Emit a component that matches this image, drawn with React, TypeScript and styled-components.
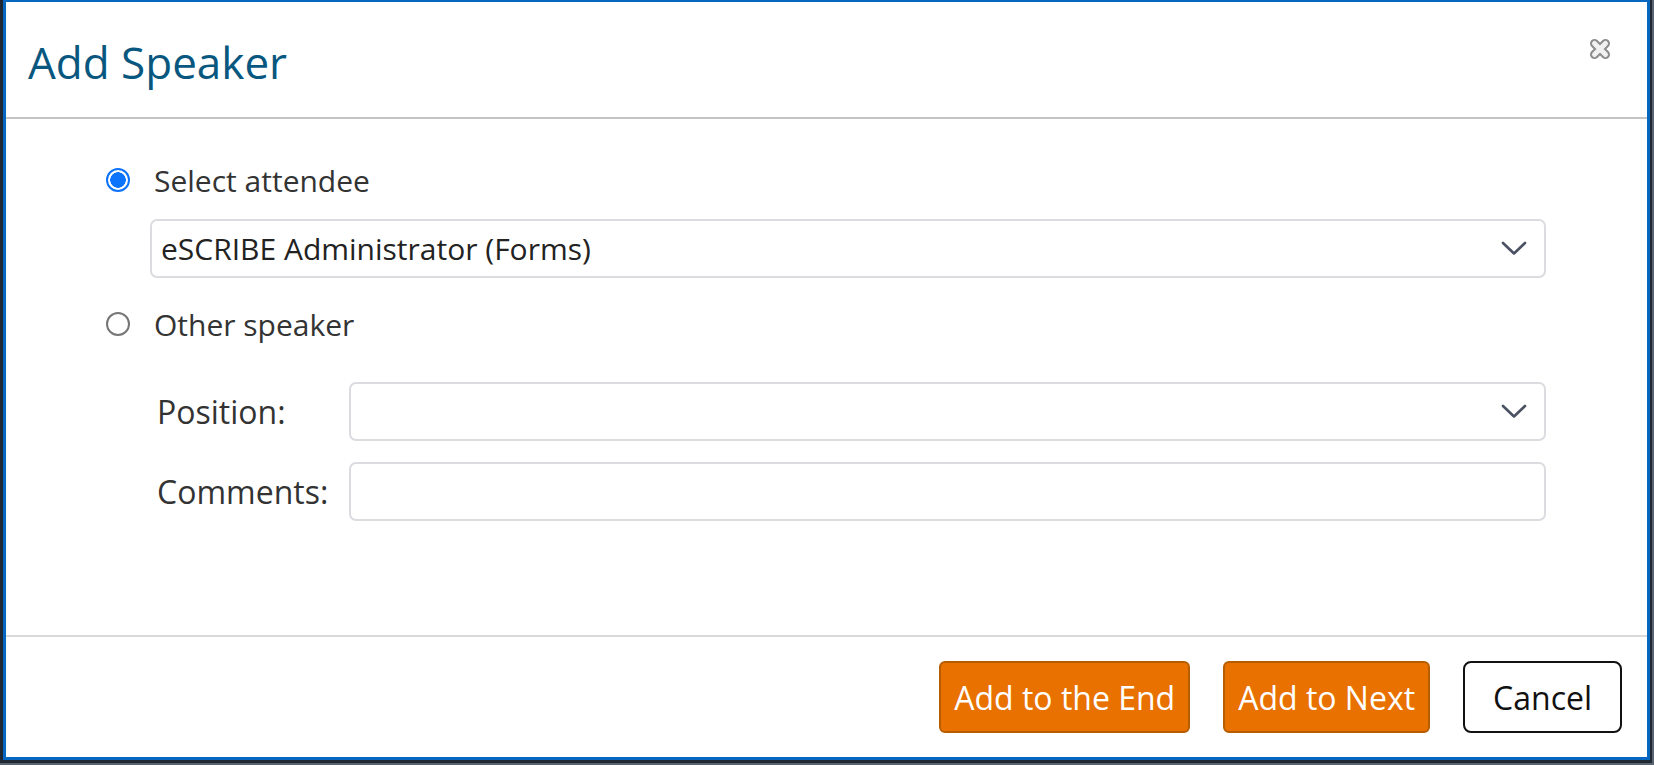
import { FC, useState } from "react";
import styled, { createGlobalStyle } from "styled-components";

const GlobalStyle = createGlobalStyle`
  body {
    margin: 0;
    background: #5a6470;
    font-family: "Open Sans", "Noto Sans", sans-serif;
  }
`;

const Chevron: FC = () => (
  <svg width="26" height="15" viewBox="0 0 26 15">
    <path
      d="M2 2 L13 12.5 L24 2"
      fill="none"
      stroke="#4a5162"
      strokeWidth="2.6"
      strokeLinecap="round"
      strokeLinejoin="round"
    />
  </svg>
);

const CloseIcon: FC = () => (
  <svg width="22" height="22" viewBox="0 0 22 22">
    <g strokeLinecap="round">
      <path d="M5.5 5.5 L16.5 16.5 M16.5 5.5 L5.5 16.5" stroke="#8c8c8c" strokeWidth="9" />
      <path d="M5.5 5.5 L16.5 16.5 M16.5 5.5 L5.5 16.5" stroke="#f1f1f1" strokeWidth="5" />
    </g>
  </svg>
);

const App: FC = () => {
  const [mode, setMode] = useState<"attendee" | "other">("attendee");

  return (
    <>
      <GlobalStyle />
      <Backdrop>
        <Frame>
          <Dialog>
            <Header>
              <Title>Add Speaker</Title>
              <CloseButton aria-label="Close">
                <CloseIcon />
              </CloseButton>
            </Header>

            <Body>
              <RadioRow onClick={() => setMode("attendee")}>
                <Radio $checked={mode === "attendee"} />
                <RadioLabel>Select attendee</RadioLabel>
              </RadioRow>

              <AttendeeSelect>
                <SelectText>eSCRIBE Administrator (Forms)</SelectText>
                <Chevron />
              </AttendeeSelect>

              <RadioRow $top={26} onClick={() => setMode("other")}>
                <Radio $checked={mode === "other"} />
                <RadioLabel>Other speaker</RadioLabel>
              </RadioRow>

              <FieldGrid>
                <FieldLabel>Position:</FieldLabel>
                <Field>
                  <SelectText />
                  <Chevron />
                </Field>
                <FieldLabel>Comments:</FieldLabel>
                <Field />
              </FieldGrid>
            </Body>

            <Footer>
              <PrimaryButton>Add to the End</PrimaryButton>
              <PrimaryButton>Add to Next</PrimaryButton>
              <CancelButton>Cancel</CancelButton>
            </Footer>
          </Dialog>
        </Frame>
      </Backdrop>
    </>
  );
};

const Backdrop = styled.div`
  width: 1654px;
  height: 765px;
  background: #5a6470;
  overflow: hidden;
`;

const Frame = styled.div`
  width: 1652px;
  height: 763px;
  box-sizing: border-box;
  padding: 0 2px 3px 3px;
  background: #1f2833;
`;

const Dialog = styled.div`
  display: flex;
  flex-direction: column;
  height: 100%;
  box-sizing: border-box;
  border: 3px solid #0667c0;
  border-top-width: 2px;
  background: #ffffff;
`;

const Header = styled.div`
  display: flex;
  justify-content: space-between;
  align-items: flex-start;
  height: 117px;
  box-sizing: border-box;
  padding: 0 36px 0 22px;
  border-bottom: 2px solid #c4c4c4;
`;

const Title = styled.h1`
  margin: 0;
  padding-top: 31px;
  font-size: 44px;
  line-height: 58px;
  font-weight: 500;
  color: #08577f;
`;

const CloseButton = styled.button`
  margin-top: 36px;
  padding: 0;
  border: none;
  background: none;
  cursor: pointer;
  display: flex;
`;

const Body = styled.div`
  flex: 1;
  display: flex;
  flex-direction: column;
  padding: 41px 101px 0 100px;
  border-bottom: 2px solid #d9d9d9;
`;

const RadioRow = styled.label<{ $top?: number }>`
  display: flex;
  align-items: center;
  gap: 24px;
  height: 40px;
  margin-top: ${(p) => p.$top ?? 0}px;
  cursor: pointer;
`;

const Radio = styled.span<{ $checked: boolean }>`
  width: 24px;
  height: 24px;
  box-sizing: border-box;
  border-radius: 50%;
  border: 2px solid ${(p) => (p.$checked ? "#0b74fb" : "#767676")};
  background: ${(p) =>
    p.$checked
      ? "radial-gradient(circle, #0b74fb 0 7.5px, #ffffff 8px)"
      : "#ffffff"};
`;

const RadioLabel = styled.span`
  font-size: 30px;
  font-weight: 500;
  color: #333333;
`;

const Field = styled.div`
  display: flex;
  align-items: center;
  justify-content: space-between;
  height: 59px;
  box-sizing: border-box;
  padding: 0 17px 0 9px;
  border: 2px solid #dcdce0;
  border-radius: 7px;
  background: #ffffff;
`;

const AttendeeSelect = styled(Field)`
  margin: 19px 0 0 44px;
`;

const SelectText = styled.span`
  font-size: 30px;
  color: #222222;
`;

const FieldGrid = styled.div`
  display: grid;
  grid-template-columns: 192px 1fr;
  row-gap: 21px;
  align-items: center;
  margin: 38px 0 0 51px;
`;

const FieldLabel = styled.span`
  font-size: 32px;
  color: #333333;
`;

const Footer = styled.div`
  display: flex;
  justify-content: flex-end;
  gap: 33px;
  padding: 24px 25px 24px 0;
`;

const PrimaryButton = styled.button`
  height: 72px;
  padding: 0 13px;
  border: 2px solid #b65d00;
  border-radius: 6px;
  background: #e87100;
  color: #ffffff;
  font-family: "Open Sans", sans-serif;
  font-size: 32px;
  cursor: pointer;
`;

const CancelButton = styled(PrimaryButton)`
  padding: 0 28px;
  border-color: #111111;
  border-radius: 8px;
  background: #ffffff;
  color: #111111;
`;

export default App;
